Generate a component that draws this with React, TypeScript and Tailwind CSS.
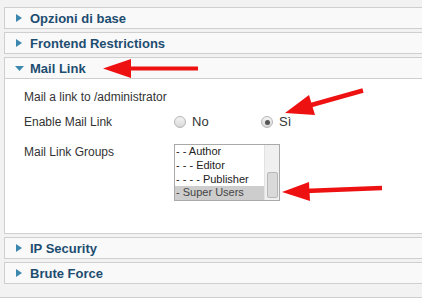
import React from "react";

function TriRight() {
  return (
    <svg width="6" height="8" viewBox="0 0 6 8" className="shrink-0">
      <polygon points="0,0 6,4 0,8" fill="#3b87ad" />
    </svg>
  );
}
function TriDown() {
  return (
    <svg width="9" height="5" viewBox="0 0 9 5" className="shrink-0">
      <polygon points="0,0 9,0 4.5,5" fill="#3b87ad" />
    </svg>
  );
}

function Header({ title, open }: { title: string; open?: boolean }) {
  return (
    <div className="h-[22px] border-y border-l border-[#cfcfcf] bg-[#f9f9f9] flex items-center">
      <div className={open ? "w-[25px] pl-[10px] flex items-center" : "w-[25px] pl-[11px] flex items-center"}>
        {open ? <TriDown /> : <TriRight />}
      </div>
      <span className="text-[13px] font-bold text-[#1d4d70] leading-none">{title}</span>
    </div>
  );
}

function Radio({ checked }: { checked?: boolean }) {
  return (
    <div className="w-[12px] h-[12px] rounded-full border border-[#b5b5b5] bg-gradient-to-b from-[#f4f4f4] to-[#d8d8d8] flex items-center justify-center">
      {checked && <div className="w-[5px] h-[5px] rounded-full bg-[#555]" />}
    </div>
  );
}

export default function App() {
  const items = [
    { t: "- - Author", sel: false },
    { t: "- - - Editor", sel: false },
    { t: "- - - - Publisher", sel: false },
    { t: "- Super Users", sel: true },
  ];
  return (
    <div
      className="relative w-[422px] h-[298px] overflow-hidden bg-[#f2f2f2]"
      style={{ fontFamily: '"Liberation Sans", Arial, sans-serif' }}
    >
      <div className="pt-[7px] pl-[4px] flex flex-col gap-[3px]">
        <Header title="Opzioni di base" />
        <Header title="Frontend Restrictions" />
        <div className="flex flex-col">
          <Header title="Mail Link" open />
          <div className="h-[155px] bg-white border-l border-b border-[#cfcfcf] pl-[19px] pt-[10px] text-[12px] text-[#333]">
            <div className="h-[16px] leading-[16px]">Mail a link to /administrator</div>
            <div className="mt-[9px] h-[16px] flex items-center">
              <div className="w-[150px] leading-[16px]">Enable Mail Link</div>
              <div className="w-[87px] flex items-center gap-[6px]">
                <Radio />
                <span className="text-[13px]">No</span>
              </div>
              <div className="flex items-center gap-[6px]">
                <Radio checked />
                <span className="text-[13px]">Sì</span>
              </div>
            </div>
            <div className="mt-[14px] flex">
              <div className="w-[150px] leading-[16px]">Mail Link Groups</div>
              <div className="w-[106px] h-[57px] border border-[#a9a9a9] bg-white flex">
                <div className="flex-1 flex flex-col text-[11px] text-[#222]">
                  {items.map((it) => (
                    <div
                      key={it.t}
                      className={
                        it.sel
                          ? "h-[14px] leading-[13px] pl-[1px] bg-[#cdcdcd] text-[#444]"
                          : "h-[14px] leading-[13px] pl-[1px]"
                      }
                    >
                      {it.t}
                    </div>
                  ))}
                </div>
                <div className="w-[15px] bg-[#f0f0f0] border-l border-[#e2e2e2] flex flex-col justify-end items-center pb-[2px]">
                  <div className="w-[11px] h-[26px] rounded-[2px] border border-[#b8b8b8] bg-[#d9d9d9]" />
                </div>
              </div>
            </div>
          </div>
        </div>
        <Header title="IP Security" />
        <Header title="Brute Force" />
      </div>
      <div className="absolute left-0 right-0 top-[297px] h-[1px] bg-[#cfcfcf]" />

      <svg className="absolute left-0 top-0 pointer-events-none" width="422" height="298">
        <line x1="126" y1="68.5" x2="198" y2="68.5" stroke="#ee1111" strokeWidth="4" />
        <polygon points="103,68.5 131,59 131,78" fill="#ee1111" />

        <line x1="306" y1="106.5" x2="363" y2="90.5" stroke="#ee1111" strokeWidth="4.5" />
        <polygon points="285,113 309,95 315,115" fill="#ee1111" />

        <line x1="305" y1="191" x2="382" y2="188" stroke="#ee1111" strokeWidth="4.5" />
        <polygon points="282,192 309,182 310,201" fill="#ee1111" />
      </svg>
    </div>
  );
}
